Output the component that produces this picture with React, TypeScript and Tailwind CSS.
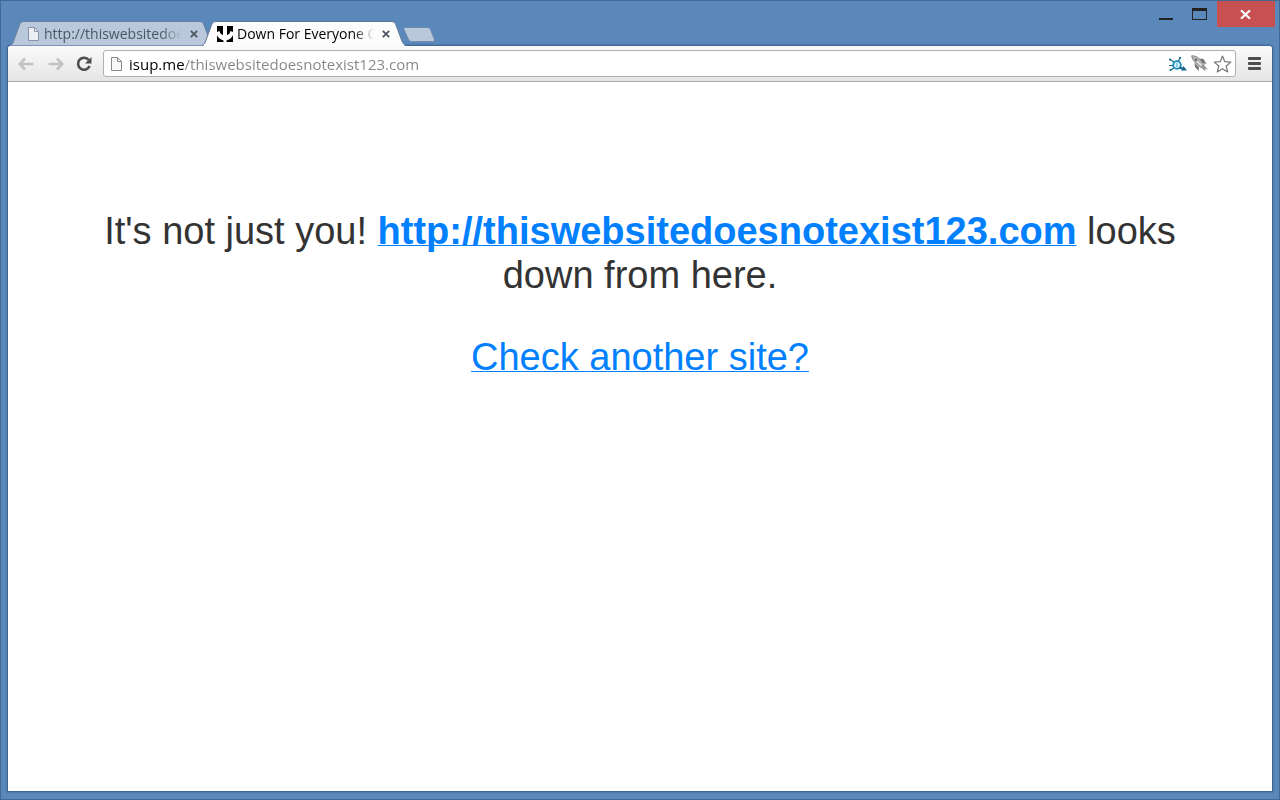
import type { ReactNode } from "react";

const PageIcon = ({ className = "" }: { className?: string }) => (
  <svg className={`shrink-0 ${className}`} width="13" height="16" viewBox="0 0 13 16" fill="none">
    <path d="M1.5 1.5h6l4 4v9h-10z" fill="#f8f8f8" fillOpacity="0.8" stroke="currentColor" />
    <path d="M7.5 1.5v4h4" stroke="currentColor" />
  </svg>
);

const DownIcon = () => (
  <svg className="shrink-0" width="16" height="16" viewBox="0 0 16 16">
    <path d="M0 0h16v16H0z" fill="#fff" />
    <path d="M0 0h6v9C4.600 8.700 3.600 7.800 3 6.500L2.500 5 0 6z" fill="#000" />
    <path d="M16 0h-6v9c1.400-.3 2.400-1.200 3-2.500L13.500 5 16 6z" fill="#000" />
    <path d="M0 9c.8 2.600 3 4.300 6.500 5.500V16H0zM16 9c-.8 2.600-3 4.300-6.500 5.500V16H16z" fill="#000" />
  </svg>
);

const CloseIcon = () => (
  <svg width="8" height="8" viewBox="0 0 8 8" stroke="currentColor" strokeWidth="1.8">
    <path d="M.8.8l6.400 6.400M7.200.8L.8 7.200" />
  </svg>
);

type TabProps = {
  title: string;
  icon: ReactNode;
  active?: boolean;
};

const Tab = ({ title, icon, active }: TabProps) => {
  return (
    <div
      className={`relative flex items-center w-[204px] h-[25px] pr-3 ${
        active ? "z-10 -ml-3 pl-[15px]" : "pl-[17px]"
      }`}
    >
      <svg
        className="absolute inset-0 w-full h-full overflow-visible"
        viewBox="0 0 204 25"
        preserveAspectRatio="none"
      >
        <path
          d="M0 24.500C2 24 3 22 4 19L9.500 4C10.500 1.500 11.500.5 14 .5H189C192 .5 193 1.500 194 4L199.500 19C200.500 22 202 24 204 24.500"
          fill={active ? "#fcfcfc" : "#b9c8da"}
          stroke={active ? "#5f7896" : "#67809f"}
        />
        {active && <path d="M2 24.500h200" stroke="#fafafa" />}
      </svg>
      <button
        className={`relative flex items-center flex-1 min-w-0 h-6 gap-1 text-left ${
          active ? "text-black" : "text-[#4d5663]"
        }`}
      >
        {icon}
        <span className="flex-1 overflow-hidden whitespace-nowrap mask-r-from-85% text-[14px] leading-5">
          {title}
        </span>
      </button>
      <button aria-label="Close tab" className="relative ml-1 p-1 text-[#4f5661]">
        <CloseIcon />
      </button>
    </div>
  );
};

const WindowControls = () => (
  <div className="flex items-start pr-1">
    <button aria-label="Minimize" className="flex justify-center w-[32px] h-[25px] pt-[17px]">
      <span className="w-[14px] h-[2px] bg-[#222]" />
    </button>
    <button aria-label="Maximize" className="flex justify-center w-[35px] h-[25px] pt-[7px]">
      <span className="w-[15px] h-3 border border-t-[3px] border-[#222]" />
    </button>
    <button
      aria-label="Close"
      className="flex items-center justify-center w-[58px] h-[26px] bg-[#c75050] text-white"
    >
      <svg width="12" height="9" viewBox="0 0 12 9" stroke="currentColor" strokeWidth="2.200">
        <path d="M1 .3l9 8.400M10 .3L1 8.700" />
      </svg>
    </button>
  </div>
);

const ArrowIcon = ({ className = "" }: { className?: string }) => (
  <svg className={className} width="16" height="14" viewBox="0 0 16 14" fill="none">
    <path d="M7 1.500L1.800 7 7 12.500M2 7h13.500" stroke="#c2c2c2" strokeWidth="2.600" />
  </svg>
);

const ReloadIcon = () => (
  <svg width="16" height="16" viewBox="0 0 16 16" fill="none">
    <path d="M12.800 4A6 6 0 1 0 13.600 10" stroke="#4d4d4d" strokeWidth="2.600" />
    <path d="M15.500 1v6.500H9z" fill="#4d4d4d" />
  </svg>
);

const BugIcon = () => (
  <svg width="19" height="16" viewBox="0 0 19 16" fill="none" stroke="#17698e" strokeWidth="1.200">
    <path d="M6 6L2 3.500M5 9.500H1M6 12l-3.500 2M10.500 5l1.500-3" />
    <circle cx="9" cy="9" r="3.800" fill="#dff4fb" stroke="#1787b5" strokeWidth="1.800" />
    <path d="M9 7v4" stroke="#55bade" />
    <path d="M11.500 11.500l3 1" strokeWidth="2" />
    <path d="M13 14.500l2.500-4.500 3.500 4.500z" fill="#17698e" stroke="none" />
    <circle cx="2" cy="3.500" r="1.100" fill="#17698e" stroke="none" />
    <circle cx="12" cy="1.800" r="1.100" fill="#17698e" stroke="none" />
    <circle cx="2.500" cy="14" r="1.100" fill="#17698e" stroke="none" />
  </svg>
);

const RocketIcon = () => (
  <svg width="18" height="17" viewBox="0 0 18 17">
    <path d="M8.500 3.500l4 .5 3 5-4-1zM3.500 7.500L4 12l3.500 4 .5-4z" fill="#777" />
    <path d="M12 9l5 5.500-3-.8.5 2.800-4.500-4z" fill="#999" />
    <path d="M.7.700C4 .7 7 2 9 4.500l4 5-3 3L5 8C2.500 6 1 4 .7.700z" fill="#b8b8b8" stroke="#777" strokeWidth=".8" />
    <path d="M6 6.500l4.500 4" stroke="#e5e5e5" strokeWidth="1.500" />
    <circle cx="5" cy="4.800" r="1.300" fill="#666" />
  </svg>
);

const StarIcon = () => (
  <svg width="19" height="18" viewBox="0 0 19 18">
    <path
      d="M9.500 1l2.300 5.700 6 .4-4.600 3.900 1.500 6-5.200-3.300L4.300 17l1.500-6L1.200 7.100l6-.4z"
      fill="#fff"
      stroke="#777"
      strokeWidth="1.200"
      strokeLinejoin="round"
    />
  </svg>
);

const Toolbar = () => {
  return (
    <div className="flex items-center h-9 px-[10px] rounded-t-[3px] border-b border-[#a9a9a9] bg-linear-to-b from-[#fafafa] to-[#e5e5e5]">
      <button aria-label="Back">
        <ArrowIcon />
      </button>
      <button aria-label="Forward" className="ml-[14px]">
        <ArrowIcon className="rotate-180" />
      </button>
      <button aria-label="Reload" className="ml-3">
        <ReloadIcon />
      </button>
      {/* address bar */}
      <div className="flex items-center flex-1 h-[27px] ml-[11px] pl-[6px] pr-[3px] bg-white border border-[#b0b0b0] rounded-[3px]">
        <PageIcon className="text-[#888]" />
        {/* host is black, the path is gray */}
        <input
          aria-label="Address"
          className="flex-1 min-w-0 h-6 ml-[6px] text-[15px] leading-5 outline-none text-transparent bg-clip-text bg-linear-to-r from-black from-[55px] to-[#858585] to-[55px]"
          defaultValue="isup.me/thiswebsitedoesnotexist123.com"
        />
        <div className="flex items-center gap-1">
          <button aria-label="Inspect">
            <BugIcon />
          </button>
          <button aria-label="Boost">
            <RocketIcon />
          </button>
          <button aria-label="Bookmark">
            <StarIcon />
          </button>
        </div>
      </div>
      <button aria-label="Menu" className="flex flex-col gap-[2px] ml-3 mr-[1px]">
        <span className="w-[13px] h-[3px] rounded-[1px] bg-[#4d4d4d]" />
        <span className="w-[13px] h-[3px] rounded-[1px] bg-[#4d4d4d]" />
        <span className="w-[13px] h-[3px] rounded-[1px] bg-[#4d4d4d]" />
      </button>
    </div>
  );
};

const linkClass = "text-[#0080ff] underline decoration-1 [text-decoration-skip-ink:none]";

const App = () => {
  return (
    <div className="flex flex-col min-h-screen bg-[#5a88bb] border border-[#446894] font-['Open_Sans','Noto_Sans',sans-serif]">
      <header className="flex justify-between h-[45px]">
        <div className="relative z-10 flex items-end pl-[9px]">
          <Tab title="http://thiswebsitedoe" icon={<PageIcon className="text-[#8794a5]" />} />
          <Tab active title="Down For Everyone O" icon={<DownIcon />} />
          <button aria-label="New tab" className="ml-[-3px] mb-1">
            <svg width="32" height="15" viewBox="0 0 32 15">
              <path
                d="M2.500.5H24c2 0 3 .8 3.700 2.500l3.500 9c.5 1.500 0 2.500-1.700 2.500H9c-2 0-3-.8-3.700-2.500L1 2.500C.5 1.200 1 .5 2.500.5z"
                fill="#b9c8da"
                stroke="#6d8cb0"
              />
            </svg>
          </button>
        </div>
        <WindowControls />
      </header>

      <div className="flex flex-col flex-1 mx-[7px] mb-2 bg-white rounded-t-[3px] shadow-[0_0_2px_1px_#365b88]">
        <Toolbar />
        <main className="flex-1 px-20 pt-[127px] text-center font-['Liberation_Sans',Arial,sans-serif] text-[38px] leading-[44px] text-[#333]">
          <p>
            It's not just you!{" "}
            <a href="http://thiswebsitedoesnotexist123.com" className={`font-bold ${linkClass}`}>
              http://thiswebsitedoesnotexist123.com
            </a>{" "}
            looks down from here.
          </p>
          <p className="mt-[38px]">
            <a href="#" className={linkClass}>
              Check another site?
            </a>
          </p>
        </main>
      </div>
    </div>
  );
};

export default App;
